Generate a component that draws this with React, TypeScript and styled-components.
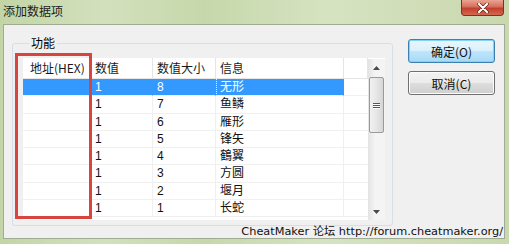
import React from 'react';
import styled, { createGlobalStyle } from 'styled-components';

const GlobalStyle = createGlobalStyle`
  html, body {
    margin: 0;
    padding: 0;
  }
  body {
    width: 509px;
    height: 244px;
    overflow: hidden;
    font-family: "Liberation Sans", "Noto Sans CJK SC", sans-serif;
    font-size: 12px;
    color: #000;
  }
`;

const Window = styled.div`
  position: relative;
  width: 509px;
  height: 244px;
  display: flex;
  flex-direction: column;
  background: linear-gradient(90deg, #c3d5a6 0%, #d3e0bd 20%, #c6d8ab 40%, #d6e3c1 65%, #cfdcb6 85%, #c9d8ae 100%);
`;

const TitleBar = styled.div`
  height: 24px;
  display: flex;
  justify-content: space-between;
  align-items: flex-start;
  padding-left: 3px;
`;

const TitleText = styled.div`
  font-family: "Noto Sans CJK SC", sans-serif;
  font-size: 12px;
  line-height: 22px;
  color: #1c1c1c;
`;

const CloseButton = styled.div`
  width: 43px;
  height: 16px;
  margin-right: 5px;
  box-sizing: border-box;
  border: 1px solid #76332a;
  border-top: none;
  border-radius: 0 0 4px 4px;
  background: linear-gradient(180deg, #e9a493 0%, #d66f5c 45%, #c23f2b 55%, #d5674f 100%);
  display: flex;
  justify-content: center;
  align-items: center;
`;

const Client = styled.div`
  flex: 1;
  margin: 0 4px 5px 3px;
  background: #f0f0f0;
  border: 1px solid #9fac93;
  display: flex;
  flex-direction: column;
`;

const MainRow = styled.div`
  display: flex;
  align-items: flex-start;
  padding: 11px 0 0 8px;
`;

const GroupBox = styled.fieldset`
  box-sizing: border-box;
  width: 381px;
  height: 190px;
  margin: 0;
  padding: 8px 7px 0 10px;
  border: 1px solid #d5dfe5;
  border-radius: 3px;
`;

const GroupLabel = styled.legend`
  margin-left: 6px;
  padding: 0 2px;
  font-family: "Noto Sans CJK SC", sans-serif;
  font-size: 12px;
  line-height: 14px;
`;

const List = styled.div`
  width: 362px;
  height: 162px;
  background: #fff;
  display: flex;
`;

const Table = styled.div`
  flex: 1;
  display: grid;
  grid-template-columns: 68px 62px 63px 128px 1fr;
  grid-auto-rows: 17.3px;
  grid-template-rows: 21px;
  align-content: start;
`;

const HeadCell = styled.div<{ $pad?: number }>`
  box-sizing: border-box;
  padding-left: ${p => p.$pad ?? 4}px;
  border-right: 1px solid #e5e5e5;
  border-bottom: 1px solid #e5e5e5;
  font-family: "Noto Sans CJK SC", sans-serif;
  font-size: 12px;
  line-height: 20px;
  white-space: nowrap;
  color: #1a1a1a;
`;

const Cell = styled.div<{ $selected?: boolean; $focus?: boolean }>`
  box-sizing: border-box;
  padding-left: 4px;
  border-right: 1px solid ${p => (p.$selected ? '#3399ff' : '#f0f0f0')};
  border-bottom: 1px solid #f0f0f0;
  background: ${p => (p.$selected ? '#3399ff' : '#fff')};
  color: ${p => (p.$selected ? '#fff' : '#111')};
  font-family: "Liberation Sans", "Noto Sans CJK SC", sans-serif;
  font-size: 12px;
  line-height: 16px;
  white-space: nowrap;
  ${p => (p.$focus ? 'border-left: 1px dotted #e8f2ff; padding-left: 3px;' : '')}
`;

const EmptyCell = styled.div`
  border-bottom: 1px solid #f0f0f0;
`;

const ScrollBar = styled.div`
  width: 17px;
  margin-top: 1px;
  display: flex;
  flex-direction: column;
  background: linear-gradient(90deg, #e3e3e3 0%, #f4f4f4 40%, #f4f4f4 100%);
`;

const ArrowBox = styled.div`
  height: 17px;
  display: flex;
  justify-content: center;
  align-items: center;
`;

const Track = styled.div`
  flex: 1;
  padding: 1px 1px 0 1px;
`;

const Thumb = styled.div`
  box-sizing: border-box;
  height: 56px;
  border: 1px solid #9a9a9a;
  border-radius: 2px;
  background: linear-gradient(90deg, #f1f1f1 0%, #e6e6e6 50%, #d6d6d6 100%);
  display: flex;
  flex-direction: column;
  justify-content: center;
  align-items: center;
  gap: 1px;
`;

const Grip = styled.div`
  width: 7px;
  height: 1px;
  background: #555;
  box-shadow: 0 1px 0 #fff;
`;

const ButtonColumn = styled.div`
  display: flex;
  flex-direction: column;
  gap: 8px;
  margin-left: 15px;
  padding-top: 3px;
`;

const Button = styled.div<{ $default?: boolean }>`
  box-sizing: border-box;
  width: 87px;
  height: 24px;
  border-radius: 3px;
  border: 1px solid ${p => (p.$default ? '#3c7fb1' : '#707070')};
  background: ${p =>
    p.$default
      ? 'linear-gradient(180deg, #eaf6fd 0%, #d9f0fc 50%, #bee6fd 51%, #a7d9f5 100%)'
      : 'linear-gradient(180deg, #f2f2f2 0%, #ebebeb 50%, #dddddd 51%, #cfcfcf 100%)'};
  box-shadow: ${p => (p.$default ? 'inset 0 0 0 1px #7fd3f7' : 'inset 0 0 0 1px #fcfcfc')};
  display: flex;
  justify-content: center;
  align-items: center;
  font-family: "Noto Sans CJK SC", sans-serif;
  font-size: 12px;
  color: #111;
`;

const Status = styled.div`
  height: 11px;
  text-align: right;
  padding-right: 1px;
  font-family: "DejaVu Sans", "Noto Sans CJK SC", sans-serif;
  font-size: 11.3px;
  line-height: 11px;
  color: #111;
  white-space: nowrap;
`;

const Annotation = styled.div`
  position: absolute;
  left: 15px;
  top: 53px;
  width: 77px;
  height: 166px;
  box-sizing: border-box;
  border: 3px solid #d9443f;
  pointer-events: none;
`;

const rows: [string, string][] = [
  ['8', '无形'],
  ['7', '鱼鳞'],
  ['6', '雁形'],
  ['5', '锋矢'],
  ['4', '鶴翼'],
  ['3', '方圆'],
  ['2', '堰月'],
  ['1', '长蛇'],
];

const Triangle = ({ up }: { up?: boolean }) => (
  <svg width="7" height="4" viewBox="0 0 7 4">
    <path d={up ? 'M0 4 L3.5 0 L7 4 Z' : 'M0 0 L3.5 4 L7 0 Z'} fill="#4a4a4a" />
  </svg>
);

export default function App() {
  return (
    <>
      <GlobalStyle />
      <Window>
        <TitleBar>
          <TitleText>添加数据项</TitleText>
          <CloseButton>
            <svg width="12" height="10" viewBox="0 0 12 10">
              <path d="M2 1 L10 9 M10 1 L2 9" stroke="#5a1a12" strokeWidth="3.4" strokeLinecap="round" />
              <path d="M2 1 L10 9 M10 1 L2 9" stroke="#fff" strokeWidth="2.2" strokeLinecap="round" />
            </svg>
          </CloseButton>
        </TitleBar>
        <Client>
          <MainRow>
            <GroupBox>
              <GroupLabel>功能</GroupLabel>
              <List>
                <Table>
                  <HeadCell $pad={7}>地址(HEX)</HeadCell>
                  <HeadCell>数值</HeadCell>
                  <HeadCell>数值大小</HeadCell>
                  <HeadCell>信息</HeadCell>
                  <HeadCell />
                  {rows.map(([size, info], i) => (
                    <React.Fragment key={info}>
                      <Cell $selected={i === 0} />
                      <Cell $selected={i === 0}>1</Cell>
                      <Cell $selected={i === 0}>{size}</Cell>
                      <Cell $selected={i === 0} $focus={i === 0}>
                        {info}
                      </Cell>
                      <EmptyCell />
                    </React.Fragment>
                  ))}
                </Table>
                <ScrollBar>
                  <ArrowBox>
                    <Triangle up />
                  </ArrowBox>
                  <Track>
                    <Thumb>
                      <Grip />
                      <Grip />
                      <Grip />
                    </Thumb>
                  </Track>
                  <ArrowBox>
                    <Triangle />
                  </ArrowBox>
                </ScrollBar>
              </List>
            </GroupBox>
            <ButtonColumn>
              <Button $default>确定(O)</Button>
              <Button>取消(C)</Button>
            </ButtonColumn>
          </MainRow>
          <Status>CheatMaker 论坛 http://forum.cheatmaker.org/</Status>
        </Client>
        <Annotation />
      </Window>
    </>
  );
}
